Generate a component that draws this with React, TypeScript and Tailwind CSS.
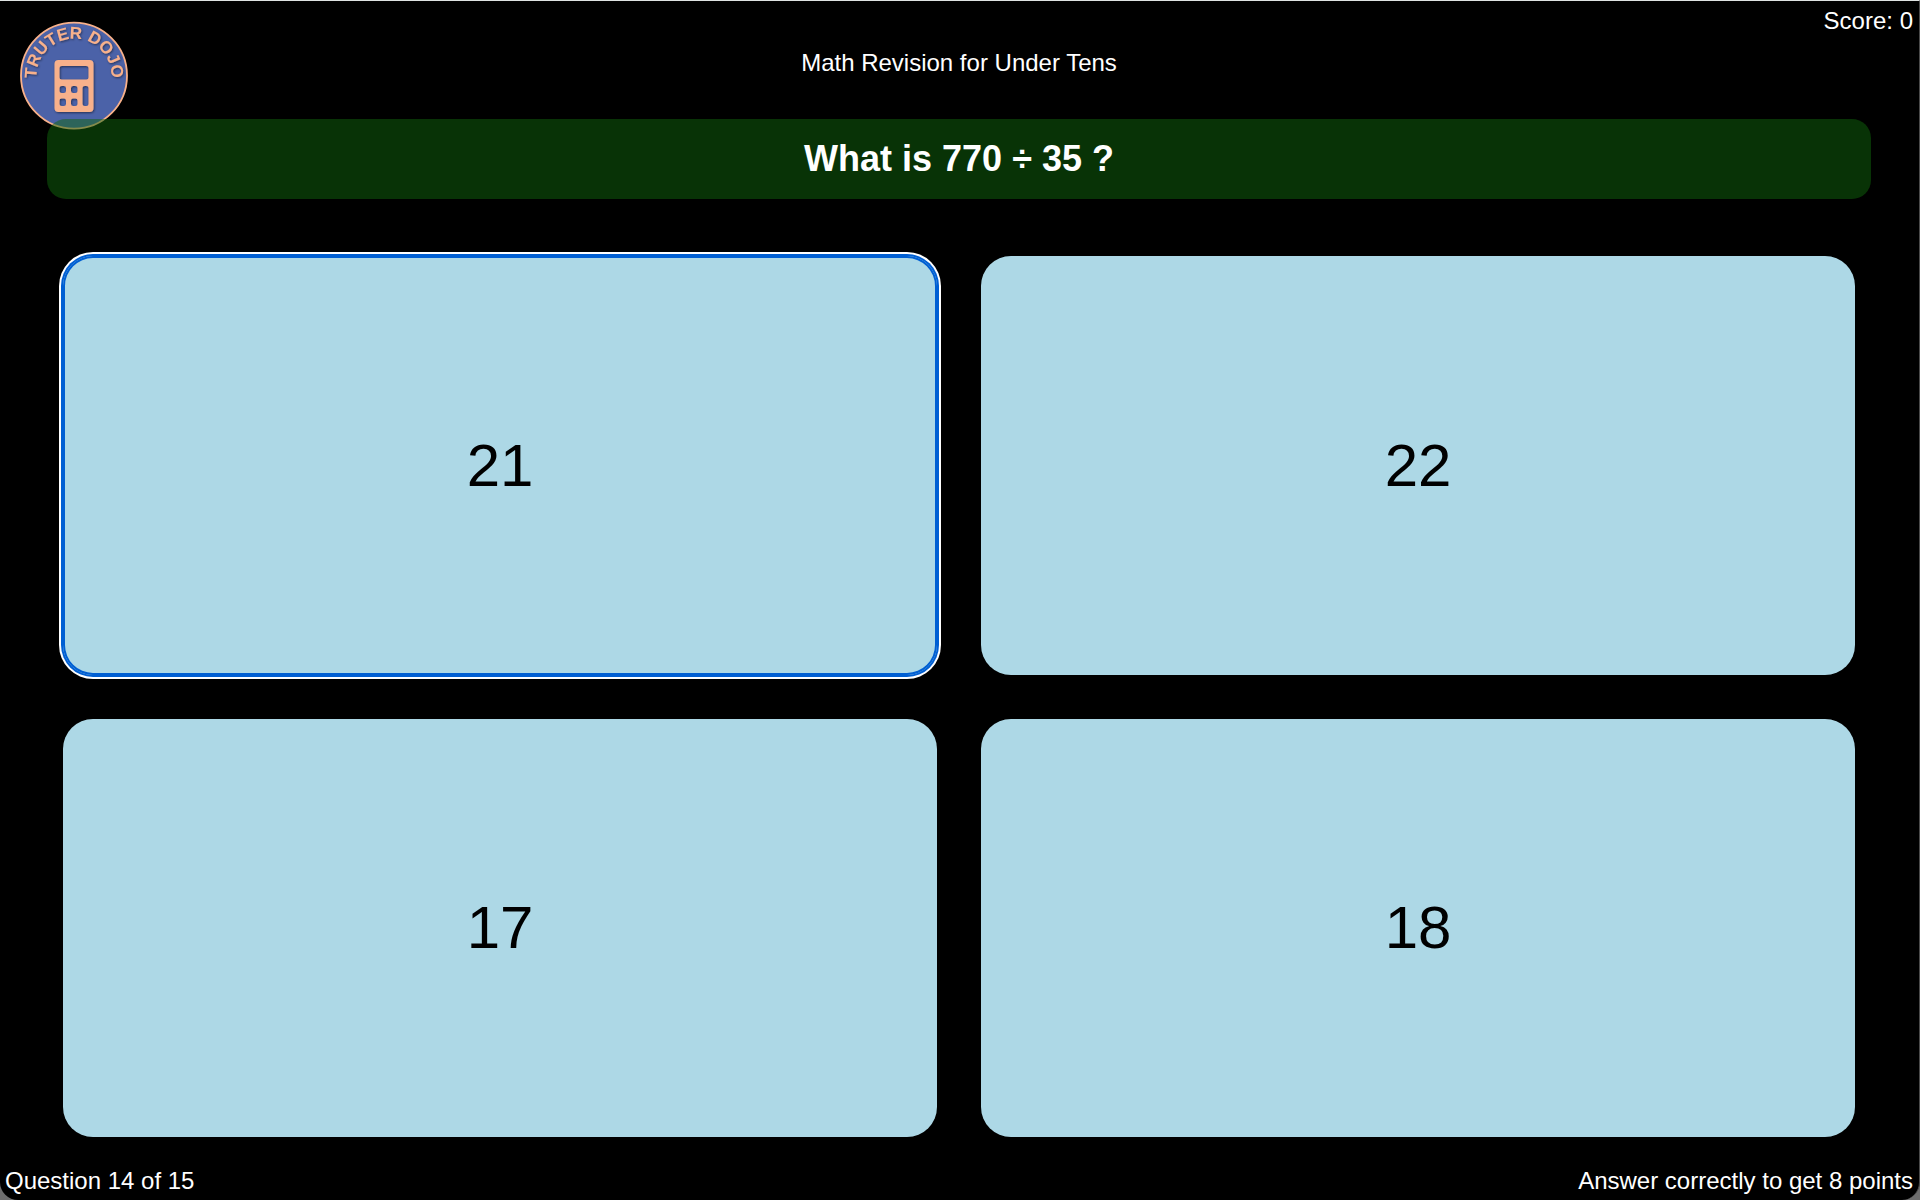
type Answer = { label: string; focused?: boolean };

const answers: Answer[] = [
  { label: "21", focused: true },
  { label: "22" },
  { label: "17" },
  { label: "18" },
];

function Logo() {
  return (
    <svg className="absolute left-[18px] top-[18px] h-28 w-28" viewBox="18 19 112 112" role="img" aria-label="Truter Dojo">
      <defs>
        <path id="logo-arc" d="M36.570 78.5 A37.5 37.5 0 1 1 111.430 78.5" />
        <filter id="logo-shadow" x="-20%" y="-20%" width="140%" height="140%">
          <feDropShadow dx="0.8" dy="1" stdDeviation="1" floodColor="#000" floodOpacity="0.5" />
        </filter>
      </defs>
      <circle cx="74" cy="75.7" r="53" fill="#4b62a8" stroke="#f8b18b" strokeWidth="1.8" />
      <g filter="url(#logo-shadow)" fill="#f8b18b">
        <text fontFamily="'Liberation Sans', Arial, sans-serif" fontSize="17" fontWeight="700">
          <textPath href="#logo-arc" startOffset="0" textLength="122">TRUTER DOJO</textPath>
        </text>
        <path
          fillRule="evenodd"
          d="M58.500 60h31q4 0 4 4v44q0 4-4 4h-31q-4 0-4-4v-44q0-4 4-4z
             M61.500 66q-2 0-2 2v9.500q0 2 2 2h25q2 0 2-2v-9.500q0-2-2-2z
             M61.500 86q-2 0-2 2v3q0 2 2 2h2.500q2 0 2-2v-3q0-2-2-2z
             M73 86q-2 0-2 2v3q0 2 2 2h2.500q2 0 2-2v-3q0-2-2-2z
             M61.500 98.500q-2 0-2 2v3.500q0 2 2 2h2.500q2 0 2-2v-3.500q0-2-2-2z
             M73 98.500q-2 0-2 2v3.500q0 2 2 2h2.500q2 0 2-2v-3.500q0-2-2-2z
             M84.500 86q-2 0-2 2v16q0 2 2 2h2q2 0 2-2v-16q0-2-2-2z"
        />
      </g>
    </svg>
  );
}

export default function App() {
  return (
    <div className="h-[1200px] w-[1920px] overflow-hidden bg-[#6e6e6e] font-['Liberation_Sans',Arial,sans-serif] text-2xl leading-7 text-white">
      <div className="relative flex h-full flex-col rounded-b-[18px] border-r border-t border-r-[#4a4a4a] border-t-[#dfe3e2] bg-black">
        <Logo />
        <div className="flex h-[41px] justify-end pr-[6px] pt-[6px]">Score: 0</div>
        <h1 className="h-[77px] pr-px pt-[7px] text-center">Math Revision for Under Tens</h1>
        <div className="relative ml-[47px] flex h-20 w-[1824px] items-center justify-center rounded-[19px] bg-[rgba(16,101,12,0.5)]">
          <h2 className="text-4xl font-bold">What is 770 ÷ 35 ?</h2>
        </div>
        <main className="ml-[63px] mt-[57px] grid w-[1792px] grid-cols-2 grid-rows-[419px_418px] gap-x-11 gap-y-11">
          {answers.map(({ label, focused }) => (
            <button
              key={label}
              className={
                focused
                  ? "rounded-[30px] bg-[#add8e6] text-[60px] leading-none text-black shadow-[inset_0_0_0_2px_#005fd3,0_0_0_2px_#005fd3,0_0_0_4px_#fff]"
                  : "rounded-[30px] bg-[#add8e6] text-[60px] leading-none text-black"
              }
            >
              {label}
            </button>
          ))}
        </main>
        <footer className="mt-auto flex justify-between pb-[5px] pl-[5px] pr-[6px]">
          <span>Question 14 of 15</span>
          <span>Answer correctly to get 8 points</span>
        </footer>
      </div>
    </div>
  );
}
